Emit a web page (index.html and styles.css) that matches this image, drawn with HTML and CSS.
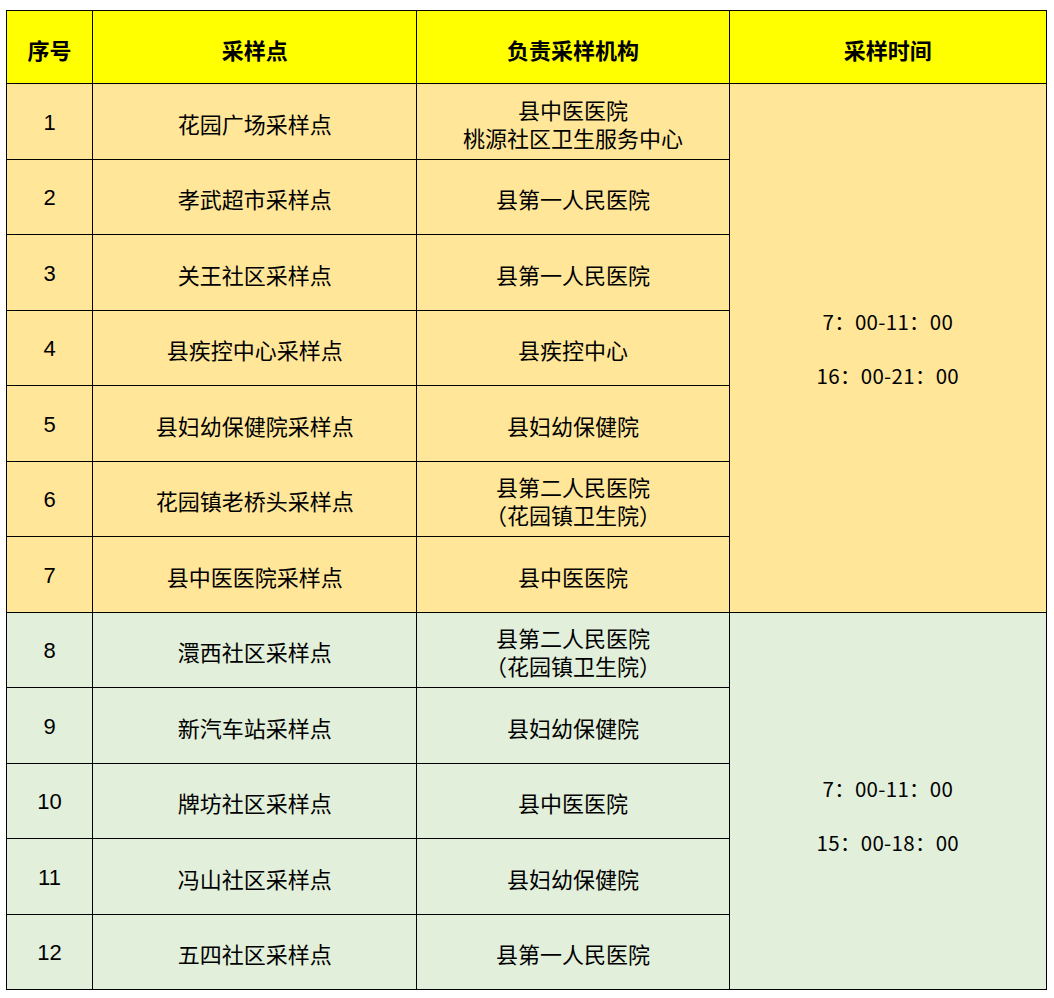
FILE: index.html
```html
<!DOCTYPE html>
<html lang="zh-CN">
<head>
<meta charset="utf-8">
<title>采样点</title>
<link rel="stylesheet" href="styles.css">
</head>
<body>
<table class="sched">
  <colgroup>
    <col class="c-no">
    <col class="c-site">
    <col class="c-org">
    <col class="c-time">
  </colgroup>
  <thead>
    <tr class="head">
      <th>序号</th>
      <th>采样点</th>
      <th>负责采样机构</th>
      <th>采样时间</th>
    </tr>
  </thead>
  <tbody>
    <tr class="peach">
      <td class="num">1</td>
      <td>花园广场采样点</td>
      <td>县中医医院<br>桃源社区卫生服务中心</td>
      <td class="time" rowspan="7">7：00-11：00<br>&nbsp;<br>16：00-21：00</td>
    </tr>
    <tr class="peach"><td class="num">2</td><td>孝武超市采样点</td><td>县第一人民医院</td></tr>
    <tr class="peach"><td class="num">3</td><td>关王社区采样点</td><td>县第一人民医院</td></tr>
    <tr class="peach"><td class="num">4</td><td>县疾控中心采样点</td><td>县疾控中心</td></tr>
    <tr class="peach"><td class="num">5</td><td>县妇幼保健院采样点</td><td>县妇幼保健院</td></tr>
    <tr class="peach"><td class="num">6</td><td>花园镇老桥头采样点</td><td>县第二人民医院<br>（花园镇卫生院）</td></tr>
    <tr class="peach"><td class="num">7</td><td>县中医医院采样点</td><td>县中医医院</td></tr>
    <tr class="green">
      <td class="num">8</td>
      <td>澴西社区采样点</td>
      <td>县第二人民医院<br>（花园镇卫生院）</td>
      <td class="time" rowspan="5">&nbsp;<br>7：00-11：00<br>&nbsp;<br>15：00-18：00</td>
    </tr>
    <tr class="green"><td class="num">9</td><td>新汽车站采样点</td><td>县妇幼保健院</td></tr>
    <tr class="green"><td class="num">10</td><td>牌坊社区采样点</td><td>县中医医院</td></tr>
    <tr class="green"><td class="num">11</td><td>冯山社区采样点</td><td>县妇幼保健院</td></tr>
    <tr class="green"><td class="num">12</td><td>五四社区采样点</td><td>县第一人民医院</td></tr>
  </tbody>
</table>
</body>
</html>
```
FILE: styles.css
```css
html, body {
  margin: 0;
  padding: 0;
  background: #ffffff;
}

body {
  font-family: "Noto Sans CJK SC", "Noto Sans", sans-serif;
  color: #000;
}

.sched {
  border-collapse: collapse;
  table-layout: fixed;
  width: 1041px;
  margin: 10px 0 0 6px;
}

.c-no { width: 86px; }
.c-site { width: 324px; }
.c-org { width: 312px; }
.c-time { width: 317px; }

.sched th,
.sched td {
  border: 1.3px solid #000;
  text-align: center;
  vertical-align: middle;
  padding: 3px 0 0;
  font-size: 22px;
  line-height: 28px;
}

.head th {
  background: #ffff00;
  height: 69px;
  font-weight: bold;
}

.peach td { background: #ffe699; height: 71.5px; }
.green td { background: #e2efda; height: 71.5px; }

.num {
  font-family: "Liberation Sans", "Noto Sans CJK SC", sans-serif;
  font-size: 19px;
}

.sched .time {
  font-size: 20.5px;
  line-height: 27px;
  letter-spacing: 0.3px;
  padding-top: 2px;
}
```
